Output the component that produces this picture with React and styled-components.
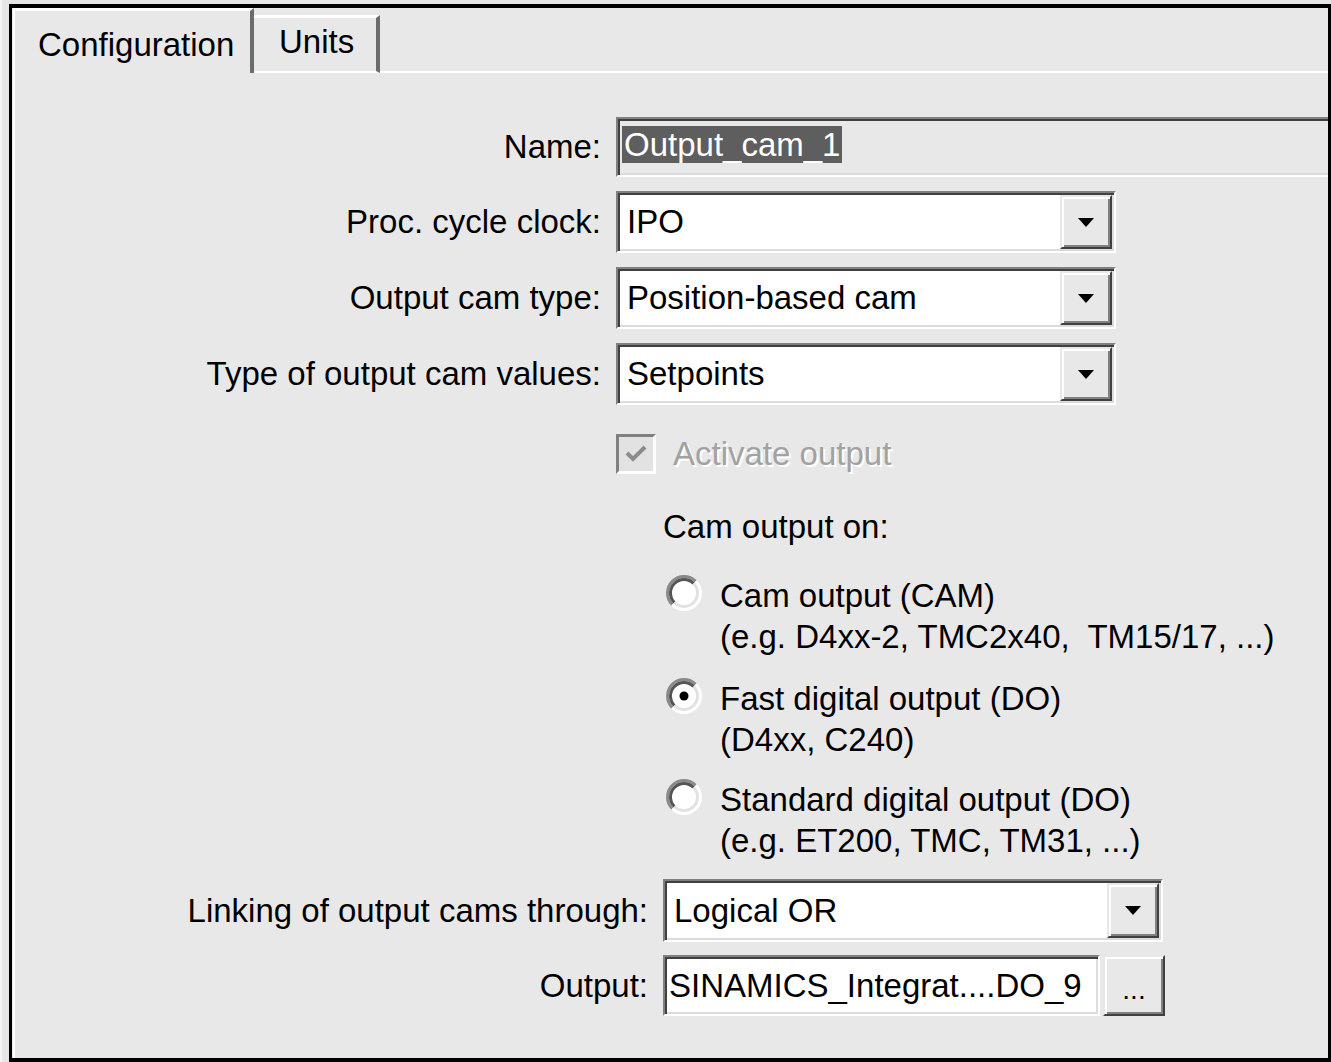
import React from "react";
import styled, { createGlobalStyle, css } from "styled-components";

const GlobalStyle = createGlobalStyle`
  * { box-sizing: border-box; }
  html, body {
    margin: 0;
    padding: 0;
    background: #e6e6e6;
  }
  body {
    font-family: "Liberation Sans", Arial, sans-serif;
    font-size: 33px;
    color: #000;
  }
`;

// classic 3D edges, drawn at the screenshot's scale
const sunken = css`
  border: 2px solid;
  border-color: #808080 #ffffff #ffffff #808080;
  box-shadow: inset 2px 2px 0 #404040, inset -2px -2px 0 #dcdcdc;
`;

const raised = css`
  border: 2px solid;
  border-color: #e8e8e8 #404040 #404040 #e8e8e8;
  box-shadow: inset 2px 2px 0 #ffffff, inset -2px -2px 0 #808080;
  background: #e8e8e8;
`;

const Screen = styled.div`
  width: 1331px;
  height: 1062px;
  padding: 4px 0 0 9px;
  border-left: 2px solid #f4f4f4;
`;

const Dialog = styled.div`
  height: 100%;
  display: flex;
  flex-direction: column;
  border: solid #000;
  border-width: 4px 3px 4px 3px;
  margin-left: -2px;
  background: #e8e8e8;
  overflow: hidden;
`;

const TabStrip = styled.div`
  height: 65px;
  flex-shrink: 0;
  display: flex;
  align-items: flex-end;
`;

const Tab = styled.div`
  width: ${(p) => p.$width}px;
  height: ${(p) => (p.$active ? 65 : 58)}px;
  margin-left: ${(p) => (p.$active ? 1 : 0)}px;
  padding-left: ${(p) => p.$indent}px;
  padding-top: ${(p) => (p.$active ? 15 : 5)}px;
  border-top: 3px solid #fff;
  border-left: ${(p) => (p.$active ? "2px solid #fff" : "none")};
  border-right: 4px solid #6c6c6c;
  border-bottom: ${(p) => (p.$active ? "none" : "2px solid #fff")};
  line-height: 38px;
  white-space: nowrap;
`;

const StripRest = styled.div`
  flex: 1;
  height: 2px;
  background: #fff;
`;

const Panel = styled.div`
  flex: 1;
  margin-left: 1px;
  border-left: 2px solid #fff;
  padding-top: 44px;
`;

const FieldRow = styled.div`
  display: grid;
  grid-template-columns: ${(p) => p.$labelWidth}px auto;
  column-gap: 15px;
  align-items: center;
  justify-content: start;
  margin-top: ${(p) => p.$top || 0}px;
`;

const Label = styled.label`
  text-align: right;
  white-space: nowrap;
  line-height: 38px;
`;

const NameField = styled.div`
  ${sunken};
  width: 800px;
  height: 60px;
  padding: 7px 0 0 4px;
  background: #e8e8e8;
`;

const Selected = styled.span`
  display: inline-block;
  line-height: 37px;
  padding: 0 2px;
  background: #5e5e5e;
  color: #fff;
`;

const Combo = styled.div`
  ${sunken};
  width: 500px;
  height: ${(p) => p.$height}px;
  padding: 2px;
  display: flex;
  background: #fff;
`;

const ComboText = styled.div`
  flex: 1;
  padding-left: 7px;
  display: flex;
  align-items: center;
  line-height: 38px;
  white-space: nowrap;
`;

const DropButton = styled.div`
  ${raised};
  width: 52px;
  display: flex;
  align-items: center;
  justify-content: center;
`;

const CheckRow = styled.div`
  display: flex;
  align-items: center;
  gap: 17px;
  height: 40px;
`;

const CheckBox = styled.div`
  width: 40px;
  height: 40px;
  border: 3px solid;
  border-color: #808080 #ffffff #ffffff #808080;
  background: #e2e2e2;
  display: flex;
  align-items: center;
  justify-content: center;
`;

const DisabledText = styled.span`
  color: #a2a2a2;
  text-shadow: 2px 2px 0 #fff;
  line-height: 40px;
  white-space: nowrap;
`;

const Group = styled.div`
  padding-left: 47px;
  margin-top: 32px;
`;

const GroupTitle = styled.div`
  line-height: 41px;
`;

const RadioOption = styled.div`
  display: flex;
  align-items: flex-start;
  gap: 18px;
  margin-top: ${(p) => p.$top}px;
`;

const RadioMark = styled.svg`
  flex-shrink: 0;
  margin-left: 3px;
`;

const OptionText = styled.div`
  line-height: 41px;
  white-space: pre;
`;

const OutputBox = styled.div`
  display: flex;
  gap: 3px;
`;

const TextField = styled.div`
  ${sunken};
  width: 437px;
  height: 61px;
  padding-left: 4px;
  display: flex;
  align-items: center;
  background: #fff;
  white-space: nowrap;
  overflow: hidden;
`;

const BrowseButton = styled.div`
  ${raised};
  width: 62px;
  height: 61px;
  display: flex;
  align-items: center;
  justify-content: center;
  font-size: 28px;
  padding-top: 8px;
`;

const Arrow = () => (
  <svg width="16" height="9" viewBox="0 0 16 9">
    <polygon points="0,0 16,0 8,9" fill="#000" />
  </svg>
);

const Radio = ({ checked }) => (
  <RadioMark width="36" height="36" viewBox="0 0 36 36">
    <circle cx="18" cy="18" r="15" fill="#fff" />
    <path d="M6.33 29.67 A16.5 16.5 0 0 1 29.67 6.33" fill="none" stroke="#8a8a8a" strokeWidth="3" />
    <path d="M8.45 27.55 A13.5 13.5 0 0 1 27.55 8.45" fill="none" stroke="#555" strokeWidth="3" />
    <path d="M29.67 6.33 A16.5 16.5 0 0 1 6.33 29.67" fill="none" stroke="#fff" strokeWidth="3" />
    <path d="M27.55 8.45 A13.5 13.5 0 0 1 8.45 27.55" fill="none" stroke="#e2e2e2" strokeWidth="3" />
    {checked && <circle cx="18" cy="18" r="4.5" fill="#000" />}
  </RadioMark>
);

const Select = ({ value, height = 62 }) => (
  <Combo $height={height}>
    <ComboText>{value}</ComboText>
    <DropButton>
      <Arrow />
    </DropButton>
  </Combo>
);

const outputs = [
  { top: 28, checked: false, lines: ["Cam output (CAM)", "(e.g. D4xx-2, TMC2x40,  TM15/17, ...)"] },
  { top: 21, checked: true, lines: ["Fast digital output (DO)", "(D4xx, C240)"] },
  { top: 19, checked: false, lines: ["Standard digital output (DO)", "(e.g. ET200, TMC, TM31, ...)"] },
];

export default function App() {
  return (
    <>
      <GlobalStyle />
      <Screen>
        <Dialog>
          <TabStrip>
            <Tab $active $width={241} $indent={23}>
              Configuration
            </Tab>
            <Tab $width={126} $indent={25}>
              Units
            </Tab>
            <StripRest />
          </TabStrip>

          <Panel>
            <FieldRow $labelWidth={586}>
              <Label>Name:</Label>
              <NameField>
                <Selected>Output_cam_1</Selected>
              </NameField>
            </FieldRow>

            <FieldRow $labelWidth={586} $top={14}>
              <Label>Proc. cycle clock:</Label>
              <Select value="IPO" />
            </FieldRow>

            <FieldRow $labelWidth={586} $top={14}>
              <Label>Output cam type:</Label>
              <Select value="Position-based cam" />
            </FieldRow>

            <FieldRow $labelWidth={586} $top={14}>
              <Label>Type of output cam values:</Label>
              <Select value="Setpoints" />
            </FieldRow>

            <FieldRow $labelWidth={586} $top={29}>
              <span />
              <div>
                <CheckRow>
                  <CheckBox>
                    <svg width="22" height="20" viewBox="0 0 22 20">
                      <polyline points="2,9 8,15 20,3" fill="none" stroke="#8c8c8c" strokeWidth="4" />
                    </svg>
                  </CheckBox>
                  <DisabledText>Activate output</DisabledText>
                </CheckRow>

                <Group>
                  <GroupTitle>Cam output on:</GroupTitle>
                  {outputs.map((o, i) => (
                    <RadioOption key={i} $top={o.top}>
                      <Radio checked={o.checked} />
                      <OptionText>
                        {o.lines[0]}
                        {"\n"}
                        {o.lines[1]}
                      </OptionText>
                    </RadioOption>
                  ))}
                </Group>
              </div>
            </FieldRow>

            <FieldRow $labelWidth={633} $top={18}>
              <Label>Linking of output cams through:</Label>
              <Select value="Logical OR" height={63} />
            </FieldRow>

            <FieldRow $labelWidth={633} $top={13}>
              <Label>Output:</Label>
              <OutputBox>
                <TextField>SINAMICS_Integrat....DO_9</TextField>
                <BrowseButton>...</BrowseButton>
              </OutputBox>
            </FieldRow>
          </Panel>
        </Dialog>
      </Screen>
    </>
  );
}
